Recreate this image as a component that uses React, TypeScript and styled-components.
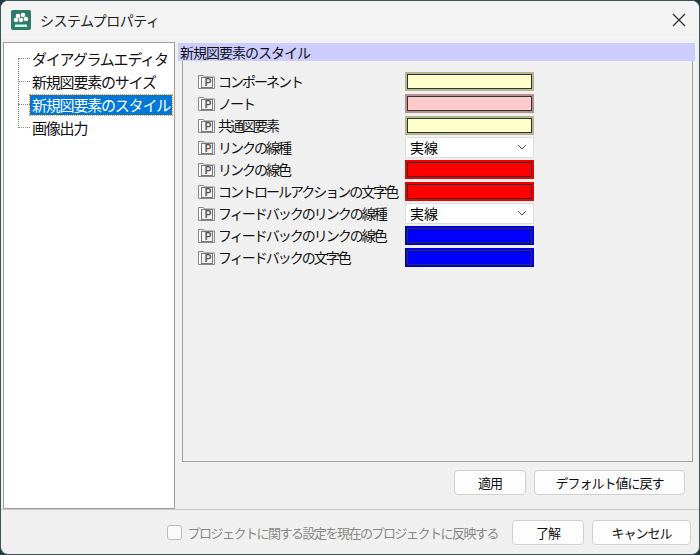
import React from "react";
import styled, { createGlobalStyle } from "styled-components";

const G = createGlobalStyle`
  html,body{margin:0;padding:0;background:#1d3b3b;}
  body{font-family:"Noto Sans CJK JP","Noto Sans",sans-serif;white-space:nowrap;}
`;
const Win = styled.div`
  width:700px;height:555px;box-sizing:border-box;background:#f0f0f0;border-radius:8px;overflow:hidden;
  display:flex;flex-direction:column;border:1px solid #3a5555;
`;
const Title = styled.div`
  height:38px;background:#f3f3f3;display:flex;align-items:center;padding:0 10px;gap:9px;font-size:14px;color:#222;flex-shrink:0;letter-spacing:-0.5px;
`;
const Close = styled.div`margin-left:auto;margin-right:2px;display:flex;`;
const Main = styled.div`flex:1;display:flex;padding:3px 4px 0 2px;gap:3px;min-height:0;`;
const Tree = styled.div`
  width:172px;background:#fff;border:1px solid #a0a0a0;box-sizing:border-box;padding:4px 0 0 10px;position:relative;
`;
const TreeLines = styled.div`
  position:absolute;left:14px;top:15px;width:14px;height:70px;border-left:1px dotted #888;
`;
const Item = styled.div<{sel?:boolean}>`
  height:23px;display:flex;align-items:center;font-size:15px;letter-spacing:-1.2px;color:#111;position:relative;
  padding-left:16px;
  &::before{content:"";position:absolute;left:4px;top:11px;width:12px;border-top:1px dotted #888;}
  span{padding:0 2px;line-height:20px;${p=>p.sel?"background:#0078d7;color:#fff;outline:1px dotted #f90;":""}}
`;
const Right = styled.div`flex:1;display:flex;flex-direction:column;`;
const Header = styled.div`background:#ccccff;height:18px;font-size:14px;letter-spacing:-1px;line-height:18px;padding-left:2px;margin-top:1px;color:#111;`;
const Panel = styled.div`
  height:401px;margin:0 2px 0 4px;border:1px solid #a0a0a0;border-top:none;box-sizing:border-box;padding:9px 0 0 14px;
  display:flex;flex-direction:column;
`;
const Row = styled.div`height:22px;display:flex;align-items:center;`;
const Label = styled.div`width:208px;display:flex;align-items:center;font-size:14px;letter-spacing:-2px;color:#111;gap:1px;`;
const Swatch = styled.div<{c:string;b:string}>`
  width:129px;height:19px;box-sizing:border-box;background:${p=>p.c};border:2px solid ${p=>p.b};
  outline:1px solid #333;outline-offset:-3px;
`;
const Combo = styled.div`
  width:129px;height:21px;background:#fff;border:1px solid #ddd;box-sizing:border-box;display:flex;align-items:center;
  padding:0 6px 0 4px;font-size:14px;justify-content:space-between;
`;
const BtnRow = styled.div`display:flex;justify-content:flex-end;gap:8px;padding:8px 10px 0 0;`;
const Btn = styled.div<{w:number}>`
  width:${p=>p.w}px;height:25px;box-sizing:border-box;background:#fdfdfd;border:1px solid #d0d0d0;border-radius:4px;
  display:flex;align-items:center;justify-content:center;font-size:13px;letter-spacing:-1px;color:#111;
`;
const Sep = styled.div`height:1px;background:#c8c8c8;`;
const Bottom = styled.div`height:44px;display:flex;align-items:center;justify-content:flex-end;padding-right:8px;gap:8px;flex-shrink:0;`;
const Check = styled.div`display:flex;align-items:center;gap:5px;font-size:13px;letter-spacing:-1.5px;color:#888;margin-right:6px;`;
const Box = styled.div`width:13px;height:13px;border:1px solid #bbb;border-radius:3px;background:#fafafa;`;

const PIcon = () => (
  <svg width="20" height="18" viewBox="0 0 20 18">
    <path d="M1.5 3.5h5l1 1.5h10v11.5h-16z" fill="#fff" stroke="#888"/>
    <rect x="4.5" y="5.5" width="11" height="10" fill="#f4f4f4" stroke="#777"/>
    <text x="10" y="14.3" fontSize="10" textAnchor="middle" fill="#555" fontFamily="Liberation Sans" fontWeight="bold">P</text>
  </svg>
);
const Logo = () => (
  <svg width="20" height="20" viewBox="0 0 20 20">
    <rect width="20" height="20" rx="2" fill="#2f7a6a"/>
    <circle cx="7" cy="6" r="2.3" fill="#fff"/><circle cx="12" cy="5" r="2.3" fill="#fff"/>
    <circle cx="5" cy="10" r="2.3" fill="#fff"/><circle cx="10" cy="10" r="2.3" fill="#fff"/><circle cx="15" cy="9" r="2.3" fill="#fff"/>
    <rect x="4" y="14.5" width="12" height="2.5" fill="#cfe"/>
  </svg>
);
const Chev = () => (<svg width="10" height="6" viewBox="0 0 10 6"><path d="M1 1l4 4 4-4" fill="none" stroke="#555"/></svg>);

type R = {l:string;c?:string;b?:string;combo?:boolean};
const rows:R[] = [
  {l:"コンポーネント",c:"#ffffcc",b:"#b5b590"},
  {l:"ノート",c:"#ffcccc",b:"#b59090"},
  {l:"共通図要素",c:"#ffffcc",b:"#b5b590"},
  {l:"リンクの線種",combo:true},
  {l:"リンクの線色",c:"#ff0000",b:"#ee0000"},
  {l:"コントロールアクションの文字色",c:"#ff0000",b:"#ee0000"},
  {l:"フィードバックのリンクの線種",combo:true},
  {l:"フィードバックのリンクの線色",c:"#0000ff",b:"#0000dd"},
  {l:"フィードバックの文字色",c:"#0000ff",b:"#0000dd"},
];

export default function App(){
  return (<>
    <G/>
    <Win>
      <Title><Logo/>システムプロパティ<Close><svg width="16" height="16" viewBox="0 0 16 16"><path d="M2 2l12 12M14 2L2 14" stroke="#333" strokeWidth="1.3"/></svg></Close></Title>
      <Main>
        <Tree>
          <TreeLines/>
          {["ダイアグラムエディタ","新規図要素のサイズ","新規図要素のスタイル","画像出力"].map((t,i)=>(
            <Item key={t} sel={i===2}><span>{t}</span></Item>
          ))}
        </Tree>
        <Right>
          <Header>新規図要素のスタイル</Header>
          <Panel>
            {rows.map(r=>(
              <Row key={r.l}>
                <Label><PIcon/>{r.l}</Label>
                {r.combo ? <Combo>実線<Chev/></Combo> : <Swatch c={r.c!} b={r.b!}/>}
              </Row>
            ))}
          </Panel>
          <BtnRow><Btn w={72}>適用</Btn><Btn w={151}>デフォルト値に戻す</Btn></BtnRow>
        </Right>
      </Main>
      <Sep/>
      <Bottom>
        <Check><Box/>プロジェクトに関する設定を現在のプロジェクトに反映する</Check>
        <Btn w={72}>了解</Btn><Btn w={99}>キャンセル</Btn>
      </Bottom>
    </Win>
  </>);
}
